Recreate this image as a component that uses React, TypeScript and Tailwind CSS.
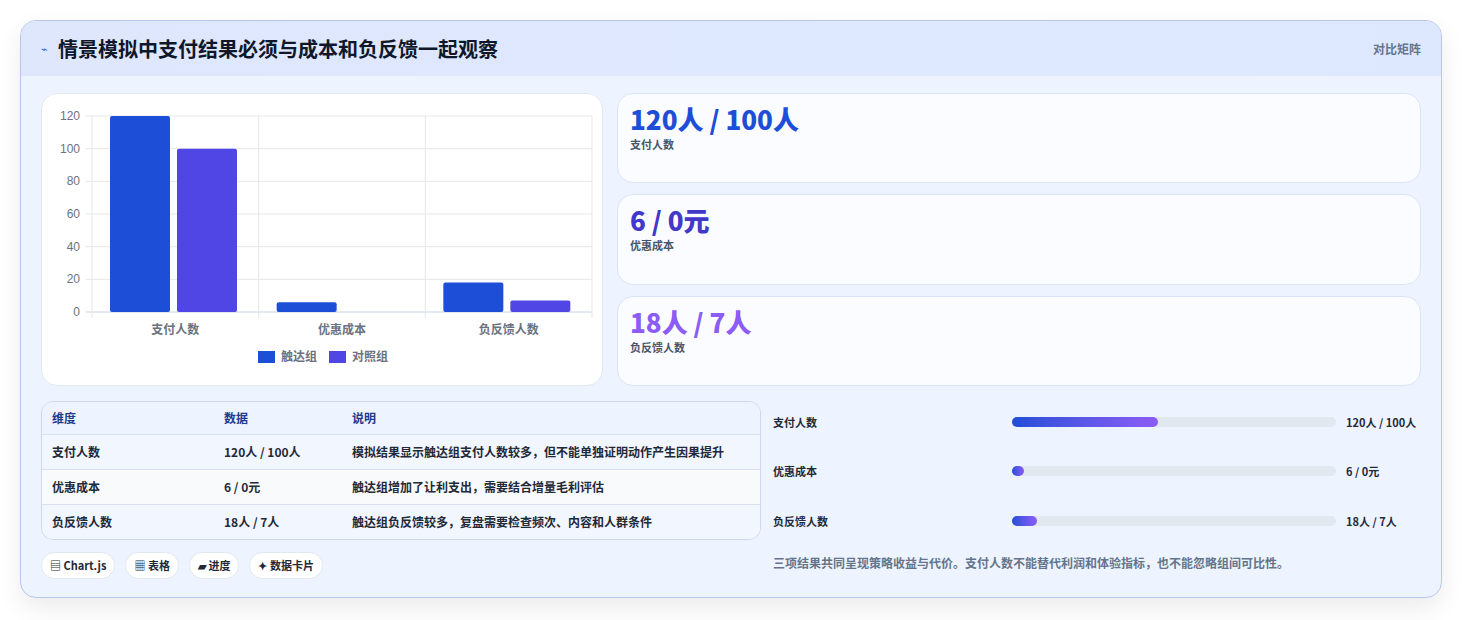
const font = { fontFamily: '"Noto Sans CJK SC", "Noto Sans", sans-serif' }

const bars = [
  { name: "支付人数", a: 120, b: 100 },
  { name: "优惠成本", a: 6, b: 0 },
  { name: "负反馈人数", a: 18, b: 7 },
]

const rows = [
  { k: "支付人数", v: "120人 / 100人", d: "模拟结果显示触达组支付人数较多，但不能单独证明动作产生因果提升" },
  { k: "优惠成本", v: "6 / 0元", d: "触达组增加了让利支出，需要结合增量毛利评估" },
  { k: "负反馈人数", v: "18人 / 7人", d: "触达组负反馈较多，复盘需要检查频次、内容和人群条件" },
]

function Chart() {
  // plot area in svg coords
  const x0 = 50, x1 = 550, yTop = 22, yBot = 218
  const y = (v: number) => yBot - (v / 120) * (yBot - yTop)
  const band = (x1 - x0) / 3
  return (
    <svg width="561" height="292" viewBox="0 0 561 292" className="block">
      {[0, 20, 40, 60, 80, 100, 120].map((t) => (
        <g key={t}>
          <line x1={x0 - 6} x2={x1} y1={y(t)} y2={y(t)} stroke={t === 0 ? "#cbd5e1" : "#e5e7eb"} />
          <text x={x0 - 12} y={y(t) + 4} textAnchor="end" fontSize="12" fill="#6b7280" fontFamily="Liberation Sans, sans-serif">{t}</text>
        </g>
      ))}
      {[0, 1, 2, 3].map((i) => (
        <line key={i} x1={x0 + i * band} x2={x0 + i * band} y1={yTop} y2={yBot + 6} stroke="#e5e7eb" />
      ))}
      {bars.map((b, i) => {
        const bx = x0 + i * band + 18
        return (
          <g key={b.name}>
            <rect x={bx} y={y(b.a)} width={60} height={yBot - y(b.a)} rx={2} fill="#1d4ed8" />
            {b.b > 0 && <rect x={bx + 67} y={y(b.b)} width={60} height={yBot - y(b.b)} rx={2} fill="#4f46e5" />}
            <text x={x0 + i * band + band / 2} y={240} textAnchor="middle" fontSize="12" fill="#6b7280" fontWeight="600" style={font}>{b.name}</text>
          </g>
        )
      })}
      <rect x={216} y={257} width={17} height={12} fill="#1d4ed8" />
      <text x={239} y={267} fontSize="12" fill="#6b7280" fontWeight="600" style={font}>触达组</text>
      <rect x={287} y={257} width={17} height={12} fill="#4f46e5" />
      <text x={310} y={267} fontSize="12" fill="#6b7280" fontWeight="600" style={font}>对照组</text>
    </svg>
  )
}

function Metric({ value, label, color }: { value: string; label: string; color: string }) {
  return (
    <div className="flex-1 rounded-2xl border border-[#dbe4f5] bg-[#fbfcff] px-3 py-2">
      <div className={`text-[26px] font-extrabold leading-[34px] ${color}`}>{value}</div>
      <div className="text-[11px] font-semibold text-[#475569]">{label}</div>
    </div>
  )
}

export default function App() {
  return (
    <div className="min-h-screen bg-white p-5" style={font}>
      <div className="overflow-hidden rounded-2xl border border-[#b9c6e8] bg-[#eef4ff] shadow-[0_10px_25px_rgba(0,0,0,0.08)]">
        <div className="flex h-[55px] items-center justify-between bg-gradient-to-r from-[#dfe7fd] to-[#dde8ff] px-5">
          <div className="flex items-center gap-2.5">
            <span className="text-[11px] text-[#2563eb]">⌁</span>
            <h1 className="text-[20px] font-bold text-[#0f172a]">情景模拟中支付结果必须与成本和负反馈一起观察</h1>
          </div>
          <span className="text-[12px] font-semibold text-[#64748b]">对比矩阵</span>
        </div>
        <div className="px-5 pb-[18px] pt-[17px]">
          <div className="flex gap-3.5">
            <div className="h-[293px] w-[562px] shrink-0 rounded-2xl border border-[#e2e8f0] bg-white">
              <Chart />
            </div>
            <div className="flex flex-1 flex-col gap-[11px]">
              <Metric value="120人 / 100人" label="支付人数" color="text-[#1d4ed8]" />
              <Metric value="6 / 0元" label="优惠成本" color="text-[#4338ca]" />
              <Metric value="18人 / 7人" label="负反馈人数" color="text-[#8b5cf6]" />
            </div>
          </div>
          <div className="mt-[15px] flex gap-3">
            <div className="w-[720px] shrink-0">
              <div className="overflow-hidden rounded-xl border border-[#cfd8ea] text-[12px]">
                <div className="flex h-8 items-center bg-[#eef4ff] font-semibold text-[#1e3a8a]">
                  <div className="w-[182px] pl-2.5">维度</div>
                  <div className="w-[128px]">数据</div>
                  <div>说明</div>
                </div>
                {rows.map((r, i) => (
                  <div key={r.k} className={`flex h-[35px] items-center border-t border-[#d9e1f0] font-semibold text-[#1f2937] ${i === 1 ? "bg-[#f8fafc]" : "bg-[#f1f6ff]"}`}>
                    <div className="w-[182px] pl-2.5">{r.k}</div>
                    <div className="w-[128px]">{r.v}</div>
                    <div>{r.d}</div>
                  </div>
                ))}
              </div>
              <div className="mt-3 flex gap-2.5 text-[11px] font-semibold text-[#1f2937]">
                {["▤ Chart.js", "▦ 表格", "▰ 进度", "✦ 数据卡片"].map((t) => (
                  <span key={t} className="rounded-full border border-[#e2e8f0] bg-white px-2 py-[4px]">{t}</span>
                ))}
              </div>
            </div>
            <div className="flex-1 -mt-1">
              {[
                { k: "支付人数", v: "120人 / 100人", w: "45%" },
                { k: "优惠成本", v: "6 / 0元", w: "3.5%" },
                { k: "负反馈人数", v: "18人 / 7人", w: "8%" },
              ].map((p) => (
                <div key={p.k} className="flex h-[49.5px] items-center gap-2.5 text-[11px] font-semibold text-[#1f2937]">
                  <div className="flex-[1]">{p.k}</div>
                  <div className="h-2.5 flex-[1.42] rounded-full bg-[#e2e8f0]">
                    <div className="h-full min-w-[12px] rounded-full bg-gradient-to-r from-[#1d4ed8] to-[#8b5cf6]" style={{ width: p.w }} />
                  </div>
                  <div className="w-[75px] shrink-0">{p.v}</div>
                </div>
              ))}
              <p className="mt-2 text-[12px] font-semibold text-[#64748b]">三项结果共同呈现策略收益与代价。支付人数不能替代利润和体验指标，也不能忽略组间可比性。</p>
            </div>
          </div>
        </div>
      </div>
    </div>
  )
}
